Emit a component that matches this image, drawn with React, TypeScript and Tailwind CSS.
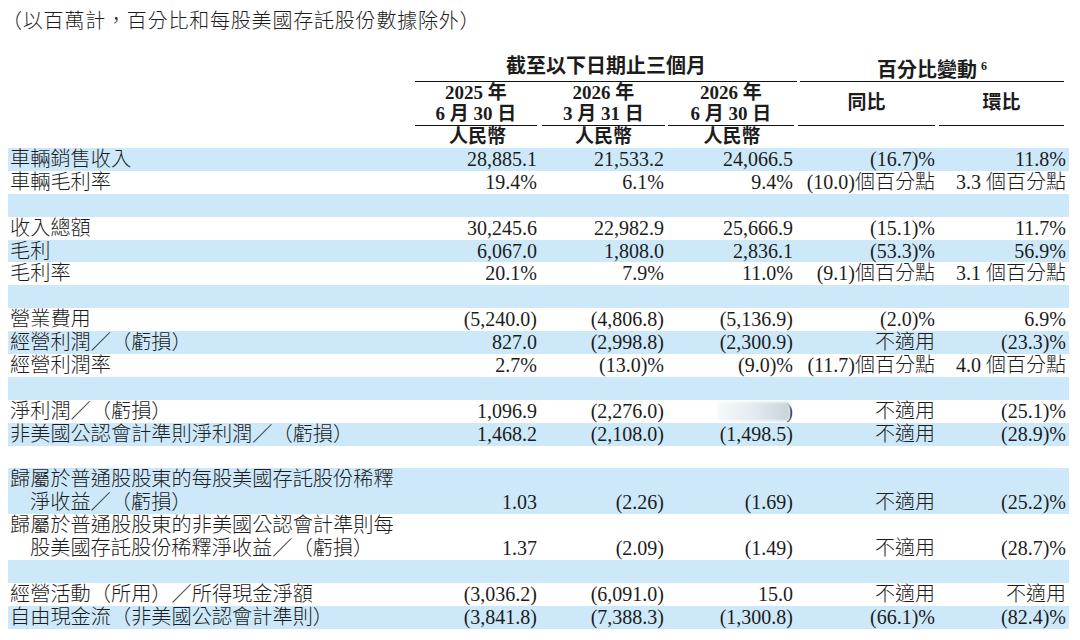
import React from "react";

type Row = {
  label: string[];
  v: string[];
  blue: boolean;
  blur?: boolean;
};

const rows: Row[] = [
  { label: ["車輛銷售收入"], v: ["28,885.1", "21,533.2", "24,066.5", "(16.7)%", "11.8%"], blue: true },
  { label: ["車輛毛利率"], v: ["19.4%", "6.1%", "9.4%", "(10.0)個百分點", "3.3 個百分點"], blue: false },
  { label: [""], v: ["", "", "", "", ""], blue: true },
  { label: ["收入總額"], v: ["30,245.6", "22,982.9", "25,666.9", "(15.1)%", "11.7%"], blue: false },
  { label: ["毛利"], v: ["6,067.0", "1,808.0", "2,836.1", "(53.3)%", "56.9%"], blue: true },
  { label: ["毛利率"], v: ["20.1%", "7.9%", "11.0%", "(9.1)個百分點", "3.1 個百分點"], blue: false },
  { label: [""], v: ["", "", "", "", ""], blue: true },
  { label: ["營業費用"], v: ["(5,240.0)", "(4,806.8)", "(5,136.9)", "(2.0)%", "6.9%"], blue: false },
  { label: ["經營利潤／（虧損）"], v: ["827.0", "(2,998.8)", "(2,300.9)", "不適用", "(23.3)%"], blue: true },
  { label: ["經營利潤率"], v: ["2.7%", "(13.0)%", "(9.0)%", "(11.7)個百分點", "4.0 個百分點"], blue: false },
  { label: [""], v: ["", "", "", "", ""], blue: true },
  { label: ["淨利潤／（虧損）"], v: ["1,096.9", "(2,276.0)", "", "不適用", "(25.1)%"], blue: false, blur: true },
  { label: ["非美國公認會計準則淨利潤／（虧損）"], v: ["1,468.2", "(2,108.0)", "(1,498.5)", "不適用", "(28.9)%"], blue: true },
  { label: [""], v: ["", "", "", "", ""], blue: false },
  { label: ["歸屬於普通股股東的每股美國存託股份稀釋", "淨收益／（虧損）"], v: ["1.03", "(2.26)", "(1.69)", "不適用", "(25.2)%"], blue: true },
  { label: ["歸屬於普通股股東的非美國公認會計準則每", "股美國存託股份稀釋淨收益／（虧損）"], v: ["1.37", "(2.09)", "(1.49)", "不適用", "(28.7)%"], blue: false },
  { label: [""], v: ["", "", "", "", ""], blue: true },
  { label: ["經營活動（所用）／所得現金淨額"], v: ["(3,036.2)", "(6,091.0)", "15.0", "不適用", "不適用"], blue: false },
  { label: ["自由現金流（非美國公認會計準則）"], v: ["(3,841.8)", "(7,388.3)", "(1,300.8)", "(66.1)%", "(82.4)%"], blue: true },
];

const pads = ["pr-[3px]", "pr-[3px]", "pr-[4px]", "pr-[2px]", "pr-[3px]"];

function DataRow({ r }: { r: Row }) {
  const two = r.label.length > 1;
  return (
    <div
      className={
        "grid grid-cols-[407px_125px_127px_130px_140px_132px] " +
        (r.blue ? "bg-[#cde9f9] " : "bg-white ") +
        (two ? "h-[45.8px]" : "h-[22.9px]")
      }
    >
      <div className="pl-[2px] flex flex-col justify-end font-light text-[20.2px] leading-[22.9px] whitespace-nowrap">
        <div>{r.label[0]}</div>
        {two && <div className="pl-[20px]">{r.label[1]}</div>}
      </div>
      {r.v.map((val, i) => (
        <div
          key={i}
          className={
            "flex items-end justify-end text-[20px] leading-[22.9px] whitespace-nowrap " + pads[i]
          }
        >
          {r.blur && i === 2 ? (
            <span className="flex items-center h-[22.9px]">
              <span className="block w-[72px] h-[19px] rounded-[3px] bg-gradient-to-r from-[#f4f8fb] via-[#e3ebf0] to-[#c7d2d9] blur-[1.5px]" />
              <span className="-ml-[4px]">)</span>
            </span>
          ) : (
            <span className={/[個不]/.test(val) ? "font-light" : ""}>{val}</span>
          )}
        </div>
      ))}
    </div>
  );
}

export default function App() {
  return (
    <div className="w-[1080px] h-[640px] bg-white text-[#1c1c1c] font-['Liberation_Serif','Noto_Sans_CJK_TC',serif] overflow-hidden">
      <div className="h-[55px] pl-[2px] pt-[8px] text-[20px] tracking-[0.8px] leading-[24px] font-light whitespace-nowrap font-['Noto_Sans_CJK_TC',sans-serif]">
        （以百萬計，百分比和每股美國存託股份數據除外）
      </div>
      <div className="ml-[8px] w-[1061px]">
        <div className="grid grid-cols-[407px_125px_127px_130px_140px_132px] h-[25px]">
          <div />
          <div className="col-span-3 border-b-[1.5px] border-[#111] text-center text-[20px] leading-[22px] font-bold">
            截至以下日期止三個月
          </div>
          <div className="col-span-2 ml-[3px] mr-[5px] border-b-[1.5px] border-[#111] text-center text-[20px] leading-[22px] font-bold">
            百分比變動<span className="text-[12px] align-[7px] ml-[4px]">6</span>
          </div>
        </div>
        <div className="grid grid-cols-[407px_125px_127px_130px_140px_132px] h-[46px] font-bold text-[19px] leading-[21px]">
          <div />
          <div className="mr-[3px] border-b-[1.5px] border-[#111] text-center pt-[2px]">
            <div>2025 年</div>
            <div>6 月 30 日</div>
          </div>
          <div className="ml-[2px] mr-[2px] border-b-[1.5px] border-[#111] text-center pt-[2px]">
            <div>2026 年</div>
            <div>3 月 31 日</div>
          </div>
          <div className="ml-[1px] mr-[3px] border-b-[1.5px] border-[#111] text-center pt-[2px]">
            <div>2026 年</div>
            <div>6 月 30 日</div>
          </div>
          <div className="ml-[1px] mr-[2px] border-b-[1.5px] border-[#111] flex items-center justify-center">
            同比
          </div>
          <div className="ml-[2px] mr-[5px] border-b-[1.5px] border-[#111] flex items-center justify-center">
            環比
          </div>
        </div>
        <div className="grid grid-cols-[407px_125px_127px_130px_140px_132px] h-[22px] font-bold text-[19px] leading-[22px]">
          <div />
          <div className="text-center">人民幣</div>
          <div className="text-center">人民幣</div>
          <div className="text-center">人民幣</div>
          <div />
          <div />
        </div>
        {rows.map((r, i) => (
          <DataRow key={i} r={r} />
        ))}
      </div>
    </div>
  );
}
